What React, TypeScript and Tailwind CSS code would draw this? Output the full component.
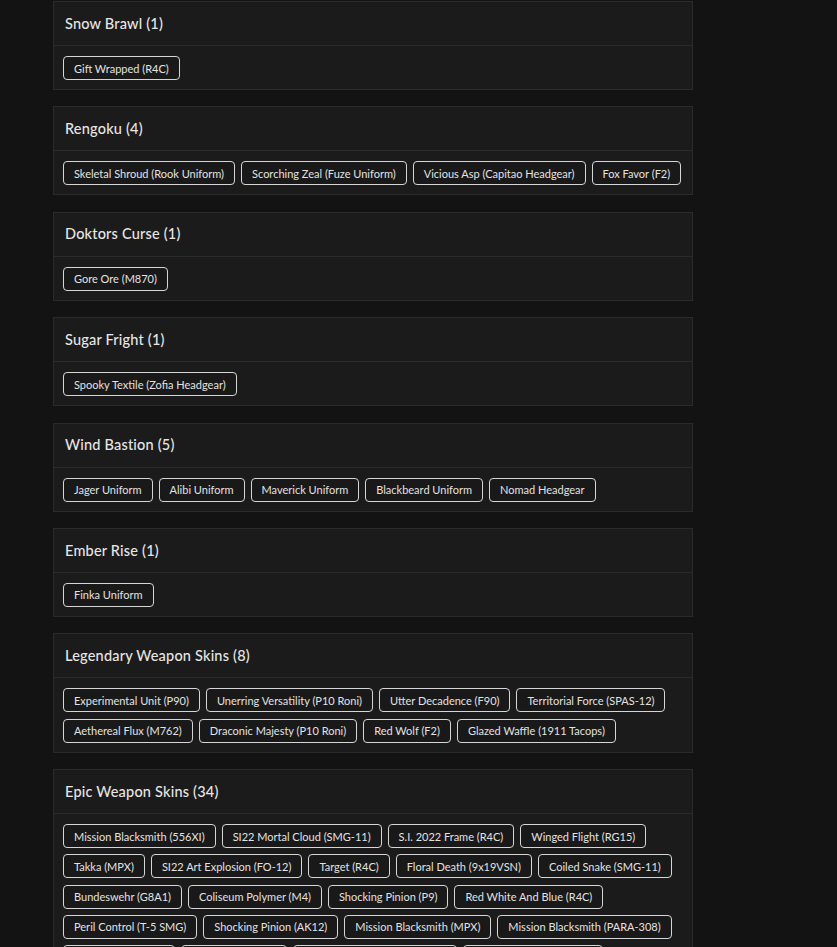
type Group = { name: string; items: string[] };

const GROUPS: Group[] = [
  { name: 'Snow Brawl', items: ['Gift Wrapped (R4C)'] },
  {
    name: 'Rengoku',
    items: ['Skeletal Shroud (Rook Uniform)', 'Scorching Zeal (Fuze Uniform)', 'Vicious Asp (Capitao Headgear)', 'Fox Favor (F2)'],
  },
  { name: 'Doktors Curse', items: ['Gore Ore (M870)'] },
  { name: 'Sugar Fright', items: ['Spooky Textile (Zofia Headgear)'] },
  {
    name: 'Wind Bastion',
    items: ['Jager Uniform', 'Alibi Uniform', 'Maverick Uniform', 'Blackbeard Uniform', 'Nomad Headgear'],
  },
  { name: 'Ember Rise', items: ['Finka Uniform'] },
  {
    name: 'Legendary Weapon Skins',
    items: [
      'Experimental Unit (P90)', 'Unerring Versatility (P10 Roni)', 'Utter Decadence (F90)', 'Territorial Force (SPAS-12)',
      'Aethereal Flux (M762)', 'Draconic Majesty (P10 Roni)', 'Red Wolf (F2)', 'Glazed Waffle (1911 Tacops)',
    ],
  },
  {
    name: 'Epic Weapon Skins',
    items: [
      'Mission Blacksmith (556XI)', 'SI22 Mortal Cloud (SMG-11)', 'S.I. 2022 Frame (R4C)', 'Winged Flight (RG15)',
      'Takka (MPX)', 'SI22 Art Explosion (FO-12)', 'Target (R4C)', 'Floral Death (9x19VSN)', 'Coiled Snake (SMG-11)',
      'Bundeswehr (G8A1)', 'Coliseum Polymer (M4)', 'Shocking Pinion (P9)', 'Red White And Blue (R4C)',
      'Peril Control (T-5 SMG)', 'Shocking Pinion (AK12)', 'Mission Blacksmith (MPX)', 'Mission Blacksmith (PARA-308)',
      'Neon Dawn (MP7)', 'Gilded Rose (L85)', 'Mission Blacksmith (ARX200)', 'Crimson Talon (C8-SFW)',
      'Frost Bite (AUG A2)', 'Static Wave (M249)', 'Black Ice (SR-25)', 'Crown Jewel (Mk1 9mm)',
      'Obsidian Edge (417)', 'Mission Blacksmith (C7E)', 'Solar Flare (AR33)', 'Dragon Scale (LMG-E)',
      'Ghost Veil (Vector .45)', 'Copper Tide (SC3000K)', 'Iron Bloom (UMP45)', 'Silent Storm (CSRX 300)', 'Ashen Gale (T-95 LSW)',
    ],
  },
];

function Card({ group }: { group: Group }) {
  return (
    <div className="bg-[#1b1b1b] border border-[#2b2b2b]">
      <div className="h-[44px] px-[11px] flex items-center border-b border-[#2b2b2b]">
        <h2 className="text-[14.5px] font-medium text-[#e6e6e6] tracking-[0.2px]">
          {group.name} ({group.items.length})
        </h2>
      </div>
      <div className="px-[9px] pt-[10px] pb-[9px] flex flex-wrap gap-x-[6px] gap-y-[6.3px]">
        {group.items.map((item, i) => (
          <button
            key={i}
            className="h-[24px] px-[10px] border border-[#d6d6d6] rounded-[4px] bg-[#191919] text-[11px] text-[#e2e2e2] leading-none whitespace-nowrap"
          >
            {item}
          </button>
        ))}
      </div>
    </div>
  );
}

export default function App() {
  return (
    <div className="min-h-screen bg-[#131313] pt-px" style={{ fontFamily: 'Lato, "Open Sans", sans-serif' }}>
      <div className="ml-[53px] w-[640px] flex flex-col gap-[16.4px]">
        {GROUPS.map(g => <Card key={g.name} group={g} />)}
      </div>
    </div>
  );
}
